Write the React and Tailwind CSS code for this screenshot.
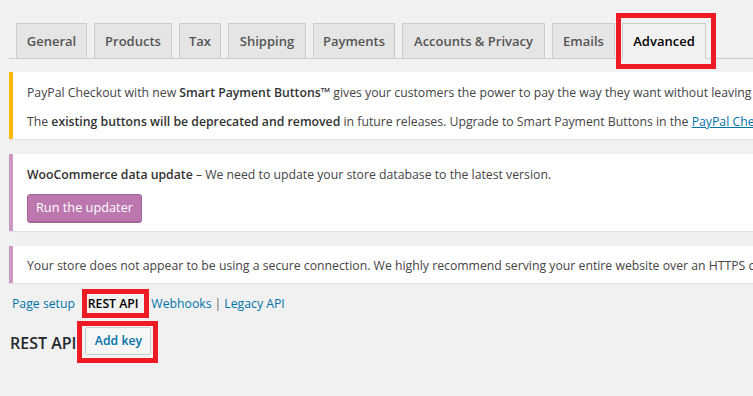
const tabs = [
  { label: 'General', w: 'w-[71px]' },
  { label: 'Products', w: 'w-[78px]' },
  { label: 'Tax', w: 'w-[42px]' },
  { label: 'Shipping', w: 'w-[78px]' },
  { label: 'Payments', w: 'w-[82px]' },
  { label: 'Accounts & Privacy', w: 'w-[143px]' },
  { label: 'Emails', w: 'w-[63px]' },
];

function RedBox({ className }) {
  return <span className={`pointer-events-none absolute z-10 border-[5px] border-[#ed1c24] ${className}`} />;
}

function Notice({ border, children }) {
  return (
    <div className={`mt-[15px] bg-white border-l-4 ${border} py-px pl-[14px] pr-3 shadow-[0_1px_1px_rgba(0,0,0,0.06)]`}>
      {children}
    </div>
  );
}

export default function App() {
  return (
    <div className="w-[753px] h-[396px] overflow-hidden bg-[#f1f1f1] font-['Open_Sans',sans-serif] text-[12.25px] text-[#444]">
      <div className="w-[1100px] pl-[9px]">
        {/* Settings tabs */}
        <div className="pt-[23px] border-b border-[#ccc] flex items-end gap-[7px] pl-[7px]">
          {tabs.map((t) => (
            <span
              key={t.label}
              className={`${t.w} h-[36px] -mb-px flex items-center justify-center border border-[#ccc] bg-[#e5e5e5] pt-px text-[13px] font-semibold text-[#555]`}
            >
              {t.label}
            </span>
          ))}
          <span className="relative w-[84px] h-[36px] -mb-px flex items-center justify-center border border-[#ccc] border-b-[#f1f1f1] bg-[#f1f1f1] pt-px text-[13px] font-semibold text-black">
            Advanced
            <RedBox className="-left-[7px] -right-[11px] -top-[11px] -bottom-[11px]" />
          </span>
        </div>

        {/* Notices */}
        <div className="mt-[13px] bg-white border-l-4 border-[#ffb900] py-px pl-[14px] pr-3 shadow-[0_1px_1px_rgba(0,0,0,0.06)] whitespace-nowrap">
          <p className="my-[6px] pt-[3.5px] pb-[0.5px] leading-[19.5px]">
            PayPal Checkout with new <strong className="font-semibold text-[#333]">Smart Payment Buttons™</strong> gives your customers the power to pay the way they want without leaving your site.
          </p>
          <p className="my-[6px] pt-[3.5px] pb-[0.5px] leading-[19.5px]">
            The <strong className="font-semibold text-[#333]">existing buttons will be deprecated and removed</strong> in future releases. Upgrade to Smart Payment Buttons in the{' '}
            <a className="text-[#0073aa] underline">PayPal Checkout settings</a>.
          </p>
        </div>

        <Notice border="border-[#cc99c2]">
          <p className="my-[6px] pt-[3.5px] pb-[0.5px] leading-[19.5px] whitespace-nowrap">
            <strong className="font-semibold text-[#333]">WooCommerce data update</strong> – We need to update your store database to the latest version.
          </p>
          <div className="my-[6px] pt-[3px] pb-[1px]">
            <button className="w-[115px] h-[29px] rounded-[3px] border border-[#a36597] bg-[#bb77ae] text-white text-[12.75px] shadow-[inset_0_-1px_0_#a36597]">
              Run the updater
            </button>
          </div>
        </Notice>

        <Notice border="border-[#cc99c2]">
          <p className="my-[6px] pt-[3.5px] pb-[0.5px] leading-[19.5px] whitespace-nowrap">
            Your store does not appear to be using a secure connection. We highly recommend serving your entire website over an HTTPS connection to help keep customer data secure.
          </p>
        </Notice>

        {/* Section links */}
        <div className="mt-[8px] pl-[3px] leading-[26px] flex items-center text-[#666]">
          <a className="text-[#0073aa]">Page setup</a>
          <span className="mx-[3px] invisible">|</span>
          <span className="relative font-semibold text-black">
            REST API
            <RedBox className="-left-[6px] -right-[10px] -top-[2px] -bottom-[1px]" />
          </span>
          <span className="mx-[3px] invisible">|</span>
          <a className="text-[#0073aa]">Webhooks</a>
          <span className="mx-[3px]">|</span>
          <a className="text-[#0073aa]">Legacy API</a>
        </div>

        {/* Page title */}
        <div className="mt-[10px] flex items-center">
          <h2 className="pl-px pt-[3px] text-[16px] font-semibold text-[#23282d]">REST API</h2>
          <span className="relative ml-[9px]">
            <button className="w-[66px] h-[28px] rounded-[2px] border border-[#ccc] bg-[#f7f7f7] text-[12.25px] font-semibold text-[#0073aa]">
              Add key
            </button>
            <RedBox className="-left-[8px] -right-[7px] -top-[6px] -bottom-[8px]" />
          </span>
        </div>
      </div>
    </div>
  );
}
